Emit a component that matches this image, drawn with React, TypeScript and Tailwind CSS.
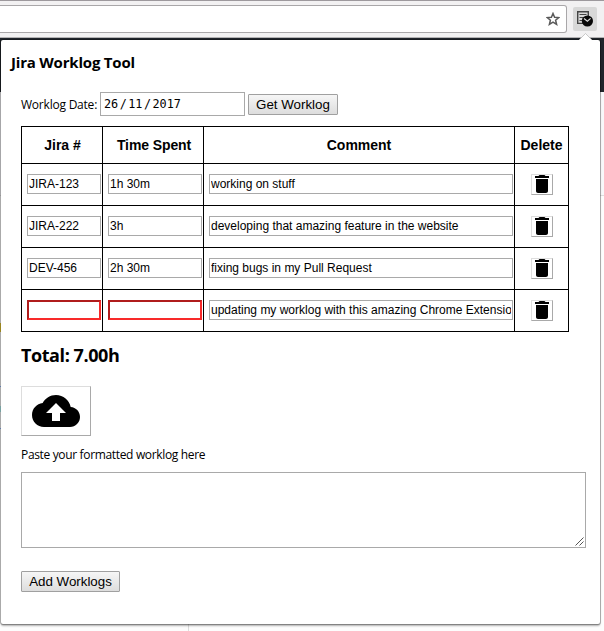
import React from "react";

const ROWS = [
  { id: "JIRA-123", time: "1h 30m", comment: "working on stuff" },
  { id: "JIRA-222", time: "3h", comment: "developing that amazing feature in the website" },
  { id: "DEV-456", time: "2h 30m", comment: "fixing bugs in my Pull Request" },
  { id: "", time: "", comment: "updating my worklog with this amazing Chrome Extension" },
];

const ARIAL = "font-['Liberation_Sans',Arial,sans-serif]";
const SEGOE = "font-['Open_Sans','Noto_Sans',sans-serif]";
const CELL = "border-r border-b border-black";
const HEAD = `${CELL} flex h-[37px] items-center justify-center whitespace-nowrap text-[14px] font-bold`;
const BUTTON = `${ARIAL} flex h-[21px] items-center justify-center whitespace-nowrap rounded-[1px] border border-[#a0a0a0] bg-linear-to-b from-[#f6f6f6] to-[#dddddd] text-[13.33px]`;

function Field({ value, width }: { value: string; width: string }) {
  const frame = value
    ? "border border-[#a9a9a9] px-px"
    : "border-2 border-t-[#b01c1c] border-l-[#b01c1c] border-r-[#f82a2a] border-b-[#f82a2a]";
  return (
    <div className={`${CELL} h-[42px] pt-[10px] pl-[5px]`}>
      <input readOnly value={value} className={`block h-5 rounded-none bg-white text-[12px] ${frame} ${width}`} />
    </div>
  );
}

function Toolbar() {
  return (
    <div className="flex h-[38px] items-start border-t border-b border-t-[#9d999d] border-b-[#b4b3b4] bg-[#f2f1f2]">
      <div className="mt-1 flex h-7 w-[567px] items-center justify-end rounded-r-[3px] border border-l-0 border-[#a9a7a9] bg-white pr-[6px]">
        <svg width="14" height="14" viewBox="0 0 14 14" fill="none" stroke="#5a5a5a" strokeWidth="1.5">
          <path d="M7 1.5 8.6 5.3 12.8 5.6 9.6 8.3 10.6 12.4 7 10.2 3.4 12.4 4.4 8.3 1.2 5.6 5.4 5.3Z" />
        </svg>
      </div>
      <div className="mt-[6px] ml-[6px] flex h-6 w-6 justify-center rounded-[2px] bg-[#d8d8d8] pt-[3px]">
        <svg width="16" height="17" viewBox="0 0 16 17">
          <path d="M6 13.4H.7V1.7h10.6V6" fill="none" stroke="#444" strokeWidth="1.4" />
          <path d="M2.5 4.5h7M2.5 7.5h4M2.5 10.5h3" stroke="#444" strokeWidth="1.2" />
          <circle cx="10.4" cy="11" r="5.6" fill="#080808" />
          <path d="m7 8.6 3.4 2.6 3.2-2.8" fill="none" stroke="#ddd" strokeWidth="1.2" />
        </svg>
      </div>
    </div>
  );
}

export default function App() {
  return (
    <div className="relative h-[631px] w-[604px] overflow-hidden bg-[#fdfdfd] text-black">
      <Toolbar />
      <div className="h-[54px] bg-[#20252b]" />
      <div className="h-[104px] border-b border-[#dedede] bg-[#f8f8fa]" />
      <div className="absolute bottom-0 left-[188px] h-[7px] w-px bg-[#dddddd]" />
      <div className="absolute top-[323px] left-0 h-[9px] w-px bg-[#e6c72f]" />
      <div className="absolute top-[386px] left-0 h-[1px] w-px bg-[#8fb8ff]" />
      <div className="absolute top-[406px] left-0 h-[6px] w-px bg-[#b0f0f0]" />
      <div className="absolute top-[428px] left-0 h-[1px] w-px bg-[#8fb8ff]" />
      <main className={`${SEGOE} absolute top-[40px] left-px flex h-[584px] w-[599px] flex-col rounded-[2px] bg-white pl-5 shadow-[0_0_0_1px_rgba(0,0,0,0.27),0_2px_2px_rgba(0,0,0,0.3)]`}>
        <h1 className="-ml-[10px] mt-[12px] h-5 whitespace-nowrap text-[15px] leading-5 font-bold tracking-[-0.2px]">Jira Worklog Tool</h1>
        <div className="mt-5 flex h-6 items-center">
          <label className="w-[79px] pt-px whitespace-nowrap text-[12px] tracking-[-0.22px]">Worklog Date:</label>
          <div className="flex h-6 w-[145px] items-center border border-[#a9a9a9] pt-[2px] pl-[3px] font-['DejaVu_Sans_Mono',monospace] text-[11.8px]">
            <span>26</span><span className="w-[10px] text-center">/</span><span>11</span><span className="w-[10px] text-center">/</span><span>2017</span>
          </div>
          <button className={`${BUTTON} mt-px ml-[3px] w-[90px]`}>Get Worklog</button>
        </div>
        <div className={`${ARIAL} mt-[10px] grid w-[548px] grid-cols-[81px_101px_311px_54px] border-t border-l border-black`}>
          <div className={`${HEAD} pl-px`}>Jira #</div>
          <div className={`${HEAD} pl-[2px] tracking-[-0.1px]`}>Time Spent</div>
          <div className={HEAD}>Comment</div>
          <div className={HEAD}>Delete</div>
          {ROWS.map((row, i) => (
            <React.Fragment key={i}>
              <Field value={row.id} width="w-[74px]" />
              <Field value={row.time} width="w-[94px]" />
              <Field value={row.comment} width="w-[304px]" />
              <div className={`${CELL} pt-[10px] pl-4`}>
                <button className="flex h-[21px] w-[22px] items-start justify-center border border-t-[#dddddd] border-r-[#a9a9a9] border-b-[#a9a9a9] border-l-[#dddddd]">
                  <svg width="14" height="18" viewBox="5 3 14 18">
                    <path d="M6 19c0 1.1.9 2 2 2h8c1.1 0 2-.9 2-2V7H6v12zM19 4h-3.5l-1-1h-5l-1 1H5v2h14V4z" />
                  </svg>
                </button>
              </div>
            </React.Fragment>
          ))}
        </div>
        <h2 className="mt-[11px] h-6 whitespace-nowrap text-[18px] leading-6 font-bold tracking-[-0.42px]">Total: 7.00h</h2>
        <button className="mt-[19px] flex h-[50px] w-[70px] items-center justify-center border border-t-[#dddddd] border-r-[#a9a9a9] border-b-[#a9a9a9] border-l-[#dddddd]">
          <svg width="48" height="48" viewBox="0 0 24 24">
            <path d="M19.35 10.04C18.67 6.59 15.64 4 12 4 9.11 4 6.6 5.64 5.35 8.04 2.34 8.36 0 10.91 0 14c0 3.31 2.69 6 6 6h13c2.76 0 5-2.24 5-5 0-2.64-2.05-4.78-4.65-4.96zM14 13v4h-4v-4H7l5-5 5 5h-3z" />
          </svg>
        </button>
        <p className="mt-[10px] h-[18px] whitespace-nowrap text-[12px] leading-[18px] tracking-[-0.34px]">Paste your formatted worklog here</p>
        <div className="mt-2 flex h-[76px] w-[565px] items-end justify-end border border-[#a9a9a9] p-px">
          <svg width="9" height="9" viewBox="0 0 9 9" stroke="#555" strokeWidth="1">
            <path d="M.5 8.5l8-8M4.5 8.5l4-4" />
          </svg>
        </div>
        <button className={`${BUTTON} mt-[23px] w-[99px]`}>Add Worklogs</button>
      </main>
      <svg className="absolute top-[33px] left-[579px]" width="13" height="8" viewBox="0 0 13 8">
        <path d="M0 7 6.5.5 13 7v1H0z" fill="#fff" />
        <path d="M0 7 6.5.5 13 7" fill="none" stroke="#b5b5b5" strokeWidth=".7" />
      </svg>
    </div>
  );
}
